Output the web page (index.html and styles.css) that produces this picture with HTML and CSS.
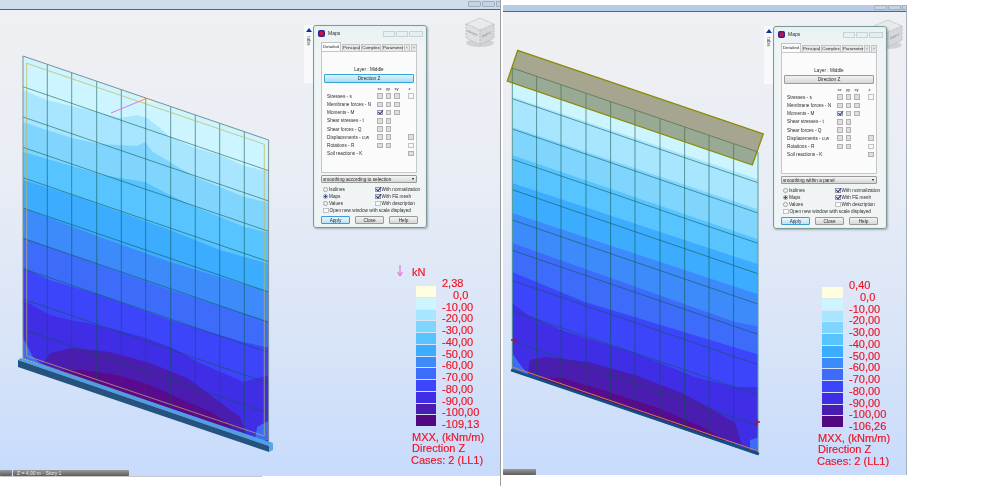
FILE: index.html
```html
<!DOCTYPE html>
<html lang="en">
<head>
<meta charset="utf-8">
<title>Maps</title>
<link rel="stylesheet" href="styles.css">
</head>
<body>
<main class="screen">
  <section class="pane pane-a">
    <header class="bar bar-a"><span class="winbtn"></span><span class="winbtn"></span><span class="winbtn winbtn-end"></span></header>
    <div class="view">
      <svg class="map" width="500" height="466" viewBox="0 10 500 466">
        <defs>
          <clipPath id="wallA"><polygon points="23,56 268.6,140 268.6,443 23,358"/></clipPath>
          <clipPath id="wallB"><polygon points="512.3,68 758,152 758,455 512.3,370"/></clipPath>
          <g id="grid">
            <path class="mesh" d="M47.3 64.3V366.3M71.7 72.7V374.7M96.7 81.2V383.2M121.3 89.6V391.6M145.7 98V400M170.7 106.5V408.5M195.3 114.9V416.9M219.7 123.3V425.3M244.3 131.7V433.7"/>
            <path class="mesh" d="M23 86.7L268.6 170.7M23 117L268.6 201M23 147.3L268.6 231.3M23 177.7L268.6 261.7M23 208L268.6 292M23 238.3L268.6 322.3M23 268.6L268.6 352.6M23 299L268.6 383M23 329.3L268.6 413.3"/>
          </g>
        </defs>
        <g clip-path="url(#wallA)">
          <rect class="c1" x="0" y="40" width="300" height="420"/>
          <path class="c2" d="M23 90L47 100L97 112L120 118L137 115L147 118L160 128L170 137L195 148L220 155L245 166L270 172V470H0V90Z"/>
          <path class="c3" d="M23 122L47 130L72 138L100 144L137 146L145 142L153 152L170 162L195 177L220 187L245 197L270 203V470H0V122Z"/>
          <path class="c4" d="M23 152L72 166L103 175L145 182L170 195L195 207L220 217L245 227L270 233V470H0V152Z"/>
          <path class="c5" d="M23 180L72 195L120 212L170 230L220 250L270 264V470H0V180Z"/>
          <path class="c6" d="M23 208L97 236L170 262L270 292V470H0V208Z"/>
          <path class="c7" d="M23 238L97 264L170 290L270 322V470H0V238Z"/>
          <path class="c8" d="M23 268L50 280L97 294L170 320L243 342L270 348V470H0V268Z"/>
          <path class="c9" d="M23 300L37 308L50 315L70 320L97 325L143 337L173 348L200 363L223 373L243 382L270 375V470H0V300Z"/>
          <path class="c7" d="M23 338L33 357L45 368H20ZM270 420L257 427L255 440H270Z"/>
          <path class="c10" d="M43 363L50 353L73 348L110 352L150 363L187 378L217 400L240 417L248 440L100 400Z"/>
          <path class="c11" d="M57 370L83 370L117 375L150 385L183 400L213 413L230 425L235 440L60 380Z"/>
        </g>
        <path class="pin-y" d="M135 100L155 103L146 97Z"/>
        <use href="#grid"/>
        <polygon class="edge" points="23,56 268.6,140 268.6,443 23,358"/>
        <polygon class="inner" points="26.7,63.3 264.3,144.3 264.3,436 26.7,356"/>
        <path class="pin" d="M111 113L145 99"/>
        <polygon class="beam-top" points="18,360 21,358 273,443 269,446"/>
        <polygon class="beam-front" points="18,360 269,446 269,452 18,367"/>
        <polygon class="beam-end" points="269,446 273,443 273,450 269,452"/>
      </svg>
      <svg class="cube" width="32" height="32" viewBox="0 0 32 32">
        <ellipse class="cube-shade" cx="16" cy="26" rx="14" ry="4"/>
        <polygon class="cube-top" points="16,1 30,7 16,13 2,7"/>
        <polygon class="cube-l" points="2,7 16,13 16,28 2,21"/>
        <polygon class="cube-r" points="30,7 16,13 16,28 30,21"/>
        <path class="cube-dash" d="M2 7L16 13L30 7M16 13V28M2 7V21L16 28L30 21V7L16 1L2 7"/>
        <text class="cube-word" transform="matrix(1 .45 0 1 3.5 15)">FRONT</text>
        <text class="cube-word" transform="matrix(1 -.45 0 1 18 20.5)">RIGHT</text>
      </svg>
      <aside class="rail"><span class="rail-arrow"></span><span class="rail-text">tabs</span></aside>
      <div class="dlg dlg-a">
        <div class="dlg-title"><span class="dlg-icon"></span><span class="dlg-name">Maps</span><span class="ctl ctl-min"></span><span class="ctl"></span><span class="ctl ctl-x"></span></div>
        <div class="tabs"><span class="tab tab-on">Detailed</span><span class="tab t18">Principal</span><span class="tab t20">Complex</span><span class="tab t21">Parameter</span><span class="tab t6">‹</span><span class="tab t6">›</span></div>
        <div class="panel">
          <p class="layer">Layer : Middle</p>
          <div class="dir dir-on">Direction Z</div>
          <div class="matrix">
            <span></span><span class="head">xx</span><span class="head">yy</span><span class="head">xy</span><span class="head">z</span>
            <span class="lab">Stresses - s</span><i class="box"></i><i class="box"></i><i class="box"></i><i class="box open"></i>
            <span class="lab">Membrane forces - N</span><i class="box"></i><i class="box"></i><i class="box"></i><span></span>
            <span class="lab">Moments - M</span><i class="box on"></i><i class="box"></i><i class="box"></i><span></span>
            <span class="lab">Shear stresses - t</span><i class="box"></i><i class="box"></i><span></span><span></span>
            <span class="lab">Shear forces - Q</span><i class="box"></i><i class="box"></i><span></span><span></span>
            <span class="lab">Displacements - u,w</span><i class="box"></i><i class="box"></i><span></span><i class="box"></i>
            <span class="lab">Rotations - R</span><i class="box"></i><i class="box"></i><span></span><i class="box open"></i>
            <span class="lab">Soil reactions - K</span><span></span><span></span><span></span><i class="box"></i>
          </div>
        </div>
        <div class="select"><span>smoothing according to selection</span><b></b></div>
        <div class="opts">
          <label class="opt"><i class="radio"></i>Isolines</label><label class="opt"><i class="box on"></i>With normalization</label>
          <label class="opt"><i class="radio sel"></i>Maps</label><label class="opt"><i class="box on"></i>With FE mesh</label>
          <label class="opt"><i class="radio"></i>Values</label><label class="opt"><i class="box open"></i>With description</label>
          <label class="opt wide"><i class="box open"></i>Open new window with scale displayed</label>
        </div>
        <div class="btns"><span class="btn btn-on">Apply</span><span class="btn">Close</span><span class="btn">Help</span></div>
      </div>
      <div class="legend legend-a">
        <div class="unit"><svg class="force" width="8" height="12" viewBox="0 0 8 12"><path d="M4 0V10M1.5 7L4 11L6.5 7"/></svg>kN</div>
        <div class="scale">
          <div class="ramp"><i class="s0"></i><i class="s1"></i><i class="s2"></i><i class="s3"></i><i class="s4"></i><i class="s5"></i><i class="s6"></i><i class="s7"></i><i class="s8"></i><i class="s9"></i><i class="s10"></i><i class="s11"></i></div>
          <div class="ticks"><span>2,38</span><span class="zero">0,0</span><span>-10,00</span><span>-20,00</span><span>-30,00</span><span>-40,00</span><span>-50,00</span><span>-60,00</span><span>-70,00</span><span>-80,00</span><span>-90,00</span><span>-100,00</span><span>-109,13</span></div>
        </div>
        <div class="foot"><span>MXX, (kNm/m)</span><span>Direction Z</span><span class="cases">Cases: 2 (LL1)</span></div>
      </div>
      <div class="tasks"><span class="task t-stub"></span><span class="task t-story">Z = 4,00 m - Story 1</span></div>
    </div>
    <footer class="status"></footer>
  </section>

  <div class="split"></div>

  <section class="pane pane-b">
    <header class="bar bar-b"><span class="winbtn"></span><span class="winbtn"></span><span class="winbtn winbtn-end"></span></header>
    <div class="view">
      <svg class="map" width="404" height="463" viewBox="503 12 404 463">
        <g clip-path="url(#wallB)">
          <rect class="c1" x="503" y="50" width="270" height="420"/>
          <path class="c2" d="M512 96.7L760 180V470H505V96.7Z"/>
          <path class="c3" d="M512 127L760 210V470H505V127Z"/>
          <path class="c4" d="M512 155L760 240V470H505V155Z"/>
          <path class="c5" d="M512 183L760 265V470H505V183Z"/>
          <path class="c6" d="M512 213L760 295V470H505V213Z"/>
          <path class="c7" d="M512 243L625 283L735 322L760 327V470H505V243Z"/>
          <path class="c8" d="M512 272L585 302L760 355V470H505V272Z"/>
          <path class="c9" d="M512 303L528 315L561 330L635 353L695 377L735 387L760 387V470H505V303Z"/>
          <path class="c7" d="M512 353L522 367L530 376H505ZM760 437L750 440L750 450H760Z"/>
          <path class="c10" d="M528 373L530 360L545 357L588 362L635 375L682 393L708 407L735 423L742 445L600 400Z"/>
          <path class="c11" d="M538 378L562 378L612 393L655 407L702 427L725 440L728 445L560 388Z"/>
        </g>
        <use href="#grid" transform="translate(489.3 12)"/>
        <polygon class="edge soft" points="512.3,68 758,152 758,455 512.3,370"/>
        <path class="orange" d="M512.3 367L758 451"/>
        <path class="spot" d="M514 337V343M511 340H517M757 419V425M754 422H760"/>
        <path class="beam-line" d="M511 370L759 454"/>
        <polygon class="shade" points="517.7,50.3 763.3,134 752.3,165 507.3,81"/>
      </svg>
      <svg class="cube cube-b" width="32" height="32" viewBox="0 0 32 32">
        <ellipse class="cube-shade" cx="16" cy="26" rx="14" ry="4"/>
        <polygon class="cube-top" points="16,1 30,7 16,13 2,7"/>
        <polygon class="cube-l" points="2,7 16,13 16,28 2,21"/>
        <polygon class="cube-r" points="30,7 16,13 16,28 30,21"/>
        <path class="cube-dash" d="M2 7L16 13L30 7M16 13V28M2 7V21L16 28L30 21V7L16 1L2 7"/>
        <text class="cube-word" transform="matrix(1 -.45 0 1 18 20.5)">RIGHT</text>
      </svg>
      <aside class="rail rail-b"><span class="rail-arrow"></span><span class="rail-text">tabs</span></aside>
      <div class="dlg dlg-b">
        <div class="dlg-title"><span class="dlg-icon"></span><span class="dlg-name">Maps</span><span class="ctl ctl-min"></span><span class="ctl"></span><span class="ctl ctl-x"></span></div>
        <div class="tabs"><span class="tab tab-on">Detailed</span><span class="tab t18">Principal</span><span class="tab t20">Complex</span><span class="tab t21">Parameter</span><span class="tab t6">‹</span><span class="tab t6">›</span></div>
        <div class="panel">
          <p class="layer">Layer : Middle</p>
          <div class="dir">Direction Z</div>
          <div class="matrix">
            <span></span><span class="head">xx</span><span class="head">yy</span><span class="head">xy</span><span class="head">z</span>
            <span class="lab">Stresses - s</span><i class="box"></i><i class="box"></i><i class="box"></i><i class="box open"></i>
            <span class="lab">Membrane forces - N</span><i class="box"></i><i class="box"></i><i class="box"></i><span></span>
            <span class="lab">Moments - M</span><i class="box on"></i><i class="box"></i><i class="box"></i><span></span>
            <span class="lab">Shear stresses - t</span><i class="box"></i><i class="box"></i><span></span><span></span>
            <span class="lab">Shear forces - Q</span><i class="box"></i><i class="box"></i><span></span><span></span>
            <span class="lab">Displacements - u,w</span><i class="box"></i><i class="box"></i><span></span><i class="box"></i>
            <span class="lab">Rotations - R</span><i class="box"></i><i class="box"></i><span></span><i class="box open"></i>
            <span class="lab">Soil reactions - K</span><span></span><span></span><span></span><i class="box"></i>
          </div>
        </div>
        <div class="select"><span>smoothing within a panel</span><b></b></div>
        <div class="opts">
          <label class="opt"><i class="radio"></i>Isolines</label><label class="opt"><i class="box on"></i>With normalization</label>
          <label class="opt"><i class="radio sel"></i>Maps</label><label class="opt"><i class="box on"></i>With FE mesh</label>
          <label class="opt"><i class="radio"></i>Values</label><label class="opt"><i class="box open"></i>With description</label>
          <label class="opt wide"><i class="box open"></i>Open new window with scale displayed</label>
        </div>
        <div class="btns"><span class="btn btn-on">Apply</span><span class="btn">Close</span><span class="btn">Help</span></div>
      </div>
      <div class="legend legend-b">
        <div class="scale">
          <div class="ramp"><i class="s0"></i><i class="s1"></i><i class="s2"></i><i class="s3"></i><i class="s4"></i><i class="s5"></i><i class="s6"></i><i class="s7"></i><i class="s8"></i><i class="s9"></i><i class="s10"></i><i class="s11"></i></div>
          <div class="ticks"><span>0,40</span><span class="zero">0,0</span><span>-10,00</span><span>-20,00</span><span>-30,00</span><span>-40,00</span><span>-50,00</span><span>-60,00</span><span>-70,00</span><span>-80,00</span><span>-90,00</span><span>-100,00</span><span>-106,26</span></div>
        </div>
        <div class="foot"><span>MXX, (kNm/m)</span><span>Direction Z</span><span class="cases">Cases: 2 (LL1)</span></div>
      </div>
      <div class="tasks"><span class="task t-b"></span></div>
    </div>
  </section>
</main>
</body>
</html>
```

FILE: styles.css
```css
* { box-sizing: border-box; }
html, body { margin: 0; background: #fff; }
body { font-family: "Liberation Sans", Arial, sans-serif; overflow: hidden; }
.screen { display: flex; width: 999px; height: 486px; overflow: hidden; }
.pane { display: flex; flex-direction: column; flex: none; }
.pane-a { width: 501px; border-right: 1px solid #9a9ea3; }
.split { width: 2px; flex: none; background: #fff; }
.pane-b { width: 404px; margin-top: 5px; height: 470px; border-right: 1px solid #a6b0bd; }
.bar { display: flex; justify-content: flex-end; gap: 1px; flex: none; border-bottom: 1px solid #5c6670; }
.bar-a { height: 10px; background: #cfdce9; padding-top: 1px; }
.bar-b { height: 7px; background: #b5cbe6; }
.winbtn { width: 13px; height: 6px; border: 1px solid #9fb0c2; border-radius: 1px; background: #c5d3e2; filter: blur(.4px); }
.winbtn-end { width: 4px; border-right: 0; }
.bar-b .winbtn { height: 5px; }
.view { position: relative; flex: 1; overflow: hidden; background: linear-gradient(#eff0f3 0%, #e9edf5 35%, #d6e3f8 75%, #c8dbfc 100%); }
.status { height: 10px; flex: none; background: #fff; border-top: 1px solid #c8c8c8; margin-right: 238px; }
.map { display: block; filter: blur(.35px); }

.c1 { fill: #ccf5ff; }
.c2 { fill: #a8e6ff; }
.c3 { fill: #80d5ff; }
.c4 { fill: #57c4ff; }
.c5 { fill: #3cacff; }
.c6 { fill: #3d8bfa; }
.c7 { fill: #3d6cfa; }
.c8 { fill: #3d45fa; }
.c9 { fill: #3f2ee6; }
.c10 { fill: #4a1cb0; }
.c11 { fill: #5a0a8c; }
.mesh { fill: none; stroke: #0c5448; stroke-opacity: .55; stroke-width: 1; }
.edge { fill: none; stroke: #7d8f92; stroke-width: 1; }
.edge.soft { stroke: #5c9a94; }
.inner { fill: none; stroke: #c3b45a; stroke-opacity: .7; stroke-width: 1; }
.pin { stroke: #e673e6; stroke-width: 1; fill: none; }
.pin-y { fill: #fff4c0; }
.beam-top { fill: #4f9fe6; }
.beam-front { fill: #25527f; }
.beam-end { fill: #5aa4ea; }
.beam-line { stroke: #12507f; stroke-width: 2.4; fill: none; }
.orange { stroke: #c8843c; stroke-width: 1; fill: none; }
.spot { stroke: #8a1a70; stroke-width: 1.4; fill: none; }
.shade { fill: rgba(110, 105, 60, .55); stroke: #8c8a00; stroke-width: 1.3; }

.cube { position: absolute; left: 464px; top: 7px; filter: blur(.6px); }
.cube-b { left: 369px; }
.cube-top { fill: #e9eaec; }
.cube-l { fill: #dfe0e2; }
.cube-r { fill: #d6d7da; }
.cube-shade { fill: #c5c7cb; opacity: .7; }
.cube-dash { fill: none; stroke: #b4b6ba; stroke-width: .8; stroke-dasharray: 2 1; }
.cube-word { font-size: 3px; fill: #77797d; }

.rail { position: absolute; left: 304px; top: 15px; width: 9px; height: 58px; background: #f8f9fa; display: flex; flex-direction: column; align-items: center; padding-top: 2px; gap: 3px; }
.rail-b { left: 261px; top: 14px; }
.rail-arrow { width: 0; height: 0; border: 3px solid transparent; border-right: 4px solid #0a2fa0; border-left: 0; transform: rotate(90deg); }
.rail-text { font-size: 5px; writing-mode: vertical-rl; color: #555; line-height: 6px; filter: blur(.3px); }

.dlg { position: absolute; width: 114px; height: 203px; border: 1px solid #7f9a9a; border-radius: 3px; background: linear-gradient(#e8f2f5, #f0f4f4 12%); padding: 0 3px; box-shadow: 1px 1px 2px rgba(60, 80, 90, .4), inset 0 0 0 1px #e2f0f0; display: flex; flex-direction: column; filter: blur(.45px); color: #2c2c2c; font-size: 4.7px; line-height: 7px; }
.dlg-a { left: 313px; top: 15px; }
.dlg-b { left: 270px; top: 14px; }
.dlg-title { height: 15px; display: flex; align-items: center; flex: none; padding-left: 1px; }
.dlg-icon { width: 7px; height: 7px; border-radius: 2px; background: radial-gradient(#d0103c 30%, #1720a0 70%); }
.dlg-name { margin-left: 3px; flex: 1; font-size: 5px; }
.ctl { width: 12px; height: 6px; border: 1px solid #c5d3d6; background: #e8f0f2; margin-left: 1px; }
.ctl-x { background: #e4eeee; width: 14px; }
.tabs { display: flex; height: 9px; flex: none; margin: 1px 0 0 4px; width: 96px; gap: 1px; align-items: flex-end; }
.tab { width: 20px; height: 7.5px; font-size: 4.4px; text-align: center; background: #e6e6e6; border: 1px solid #c4c4c4; border-bottom: 0; line-height: 6px; white-space: nowrap; }
.tab-on { height: 9px; background: #fbfbfb; line-height: 7px; }
.t18 { width: 18px; }
.t21 { width: 21px; }
.t6 { width: 6px; flex: none; }
.panel { width: 96px; height: 122px; margin-left: 4px; flex: none; background: #fbfbfb; border: 1px solid #c4c8cc; padding: 14px 2px 0; }
.layer { margin: 0; text-align: center; height: 8px; }
.dir { height: 9px; text-align: center; line-height: 7px; border: 1px solid #9b9b9b; background: linear-gradient(#f2f2f2, #d8d8d8); border-radius: 1px; }
.dir-on { border-color: #35a6d8; background: linear-gradient(#dcf3fc, #a9dcf6); }
.matrix { display: grid; grid-template-columns: 50px 8.5px 8.5px 14px 6px; grid-auto-rows: 8.2px; margin-top: 1px; padding-left: 3px; align-items: center; }
.lab { white-space: nowrap; }
.head { font-size: 4.2px; line-height: 5px; padding-left: .5px; }
.box { display: block; position: relative; width: 5.6px; height: 5.6px; flex: none; border: 1px solid #b2b2b2; background: #dedede; }
.box.open { background: #f8f8f8; border-color: #c2c2c2; }
.box.on { background: #e4e8f2; border-color: #9a9aa4; }
.box.on::after { content: ""; position: absolute; left: .8px; top: -1.4px; width: 2px; height: 4.4px; border: solid #28378c; border-width: 0 1px 1px 0; transform: rotate(40deg); }
.select { height: 8px; width: 96px; margin: 2px 0 0 4px; flex: none; border: 1px solid #9a9a9a; border-radius: 1px; background: linear-gradient(#f6f6f6, #d4d4d4); display: flex; justify-content: space-between; align-items: center; padding: 0 2px 0 1px; }
.select b { width: 0; height: 0; border: 1.5px solid transparent; border-top: 2px solid #111; border-bottom: 0; }
.opts { display: grid; grid-template-columns: 52px 1fr; grid-auto-rows: 7px; margin: 3px 0 0 6px; flex: none; width: 96px; }
.opt { display: flex; align-items: center; gap: 1px; white-space: nowrap; }
.wide { grid-column: 1 / 3; }
.radio { width: 4.6px; height: 4.6px; margin-right: .4px; border-radius: 50%; border: 1px solid #a6a6a6; background: #efefef; flex: none; }
.radio.sel { background: radial-gradient(#1a4fa8 55%, #eaeaea 60%); }
.btns { display: flex; margin: 2px 0 0 4px; width: 97px; justify-content: space-between; flex: none; }
.btn { width: 29px; height: 8px; text-align: center; line-height: 7px; border: 1px solid #9a9a9a; border-radius: 1px; background: linear-gradient(#f4f4f4, #d6d6d6); }
.btn-on { border-color: #3d9cd0; background: linear-gradient(#e8f6fd, #b9e2f8); }

.legend { position: absolute; display: flex; flex-direction: column; color: #ee1224; font-size: 11px; line-height: 11.75px; filter: blur(.25px); -webkit-text-stroke: .15px #ee1224; }
.legend-a { left: 412px; top: 256px; }
.legend-b { left: 315px; top: 267px; }
.unit { height: 11px; line-height: 12px; position: relative; }
.force { position: absolute; left: -16px; top: -1px; }
.force path { fill: none; stroke: #e95ce8; stroke-width: 1; }
.scale { display: flex; padding-left: 4px; gap: 6px; }
.ramp { display: flex; flex-direction: column; width: 20px; height: 140px; margin-top: 9px; gap: 1px; }
.legend-b .ramp { margin-top: 8px; width: 21px; }
.ramp i { flex: 1; display: block; }
.s0 { background: #fffde0; }
.s1 { background: #ccf5ff; }
.s2 { background: #a8e6ff; }
.s3 { background: #80d5ff; }
.s4 { background: #57c4ff; }
.s5 { background: #3cacff; }
.s6 { background: #3d8bfa; }
.s7 { background: #3d6cfa; }
.s8 { background: #3d45fa; }
.s9 { background: #3f2ee6; }
.s10 { background: #4a1cb0; }
.s11 { background: #52087f; }
.ticks { display: flex; flex-direction: column; padding-top: 1px; }
.zero { padding-left: 11px; }
.foot { display: flex; flex-direction: column; white-space: nowrap; line-height: 11.6px; }
.legend-a .foot { margin-top: 1px; }
.cases { margin-left: -1px; }
.tasks { position: absolute; left: 0; bottom: 0; display: flex; gap: 1px; height: 6px; }
.task { display: block; height: 6px; background: linear-gradient(#9a9a9a, #5c5c5c); border-radius: 1px; font-size: 5px; line-height: 6px; color: #eee; }
.t-stub { width: 12px; }
.t-story { width: 116px; padding-left: 4px; }
.t-b { width: 33px; }
```
